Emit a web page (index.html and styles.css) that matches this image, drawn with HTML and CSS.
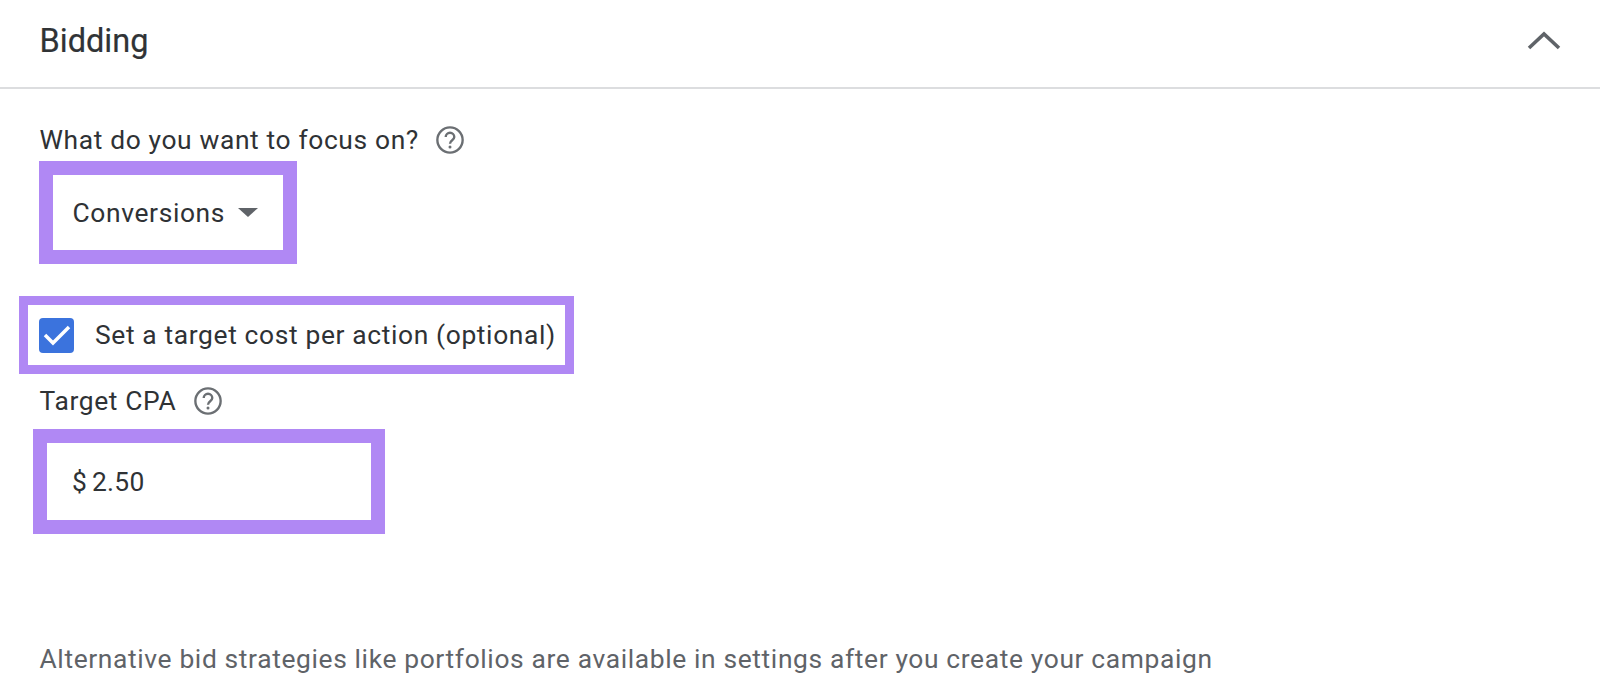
FILE: index.html
```html
<!DOCTYPE html>
<html lang="en">
<head>
<meta charset="utf-8">
<title>Bidding</title>
<link rel="stylesheet" href="styles.css">
</head>
<body>
<header class="head">
  <h2 class="title">Bidding</h2>
  <svg class="chevron" width="34" height="20" viewBox="0 0 34 20"><path d="M2 17 L17 3 L32 17" fill="none" stroke="#5f6368" stroke-width="3.6"/></svg>
</header>
<main class="body">
  <div class="label label-focus">What do you want to focus on?
    <svg class="help" width="30" height="30" viewBox="0 0 28 28"><circle cx="14" cy="14" r="11.8" fill="none" stroke="#6b6f73" stroke-width="2.2"/><path d="M10 11.2a4 4 0 0 1 8 0c0 3-4 3-4 6.2" fill="none" stroke="#6b6f73" stroke-width="2.2"/><circle cx="14" cy="20.6" r="1.4" fill="#6b6f73"/></svg>
  </div>
  <div class="mark mark-select">
    <span>Conversions</span>
    <span class="caret"></span>
  </div>
  <div class="mark mark-check">
    <span class="box"><svg width="28" height="22" viewBox="0 0 28 22"><path d="M2 11 L10 19 L26 3" fill="none" stroke="#fff" stroke-width="3.5"/></svg></span>
    <span>Set a target cost per action (optional)</span>
  </div>
  <div class="label label-cpa">Target CPA
    <svg class="help" width="30" height="30" viewBox="0 0 28 28"><circle cx="14" cy="14" r="11.8" fill="none" stroke="#6b6f73" stroke-width="2.2"/><path d="M10 11.2a4 4 0 0 1 8 0c0 3-4 3-4 6.2" fill="none" stroke="#6b6f73" stroke-width="2.2"/><circle cx="14" cy="20.6" r="1.4" fill="#6b6f73"/></svg>
  </div>
  <div class="mark mark-input">$ 2.50</div>
  <p class="note">Alternative bid strategies like portfolios are available in settings after you create your campaign</p>
</main>
</body>
</html>
```
FILE: styles.css
```css
html, body {
  margin: 0;
  height: 700px;
  overflow: hidden;
  background: #fff;
  font-family: Roboto, "Liberation Sans", sans-serif;
  color: #3c4043;
}
.head {
  display: flex;
  align-items: center;
  justify-content: space-between;
  padding: 0 39px 6px 39.5px;
  box-sizing: border-box;
  border-bottom: 2px solid #dcdddf;
  height: 89px;
}
.title {
  margin: 0;
  font-size: 32.5px;
  font-weight: 400;
  color: #303336;
  -webkit-text-stroke: 0.2px #303336;
}
.body {
  padding-left: 39.5px;
  display: flex;
  flex-direction: column;
  align-items: flex-start;
}
.label {
  display: flex;
  align-items: center;
  gap: 16.5px;
  font-size: 26.4px;
  letter-spacing: 0.63px;
  color: #2f3235;
  line-height: 30px;
}
.label-focus { margin-top: 36px; }
.label-cpa { margin-top: 12px; }
.mark {
  box-sizing: border-box;
  display: flex;
  align-items: center;
  border-style: solid;
  border-color: #b088f4;
  font-size: 26.4px;
  letter-spacing: 0.63px;
  color: #2f3235;
}
.mark-select {
  margin: 6px 0 0 -1px;
  width: 258px;
  height: 103px;
  border-width: 14px;
  padding-left: 20px;
}
.caret {
  margin-left: 13px;
  border-left: 10px solid transparent;
  border-right: 10px solid transparent;
  border-top: 9px solid #5f6368;
}
.mark-check {
  margin: 32px 0 0 -20.5px;
  width: 555px;
  height: 78px;
  border-width: 9.5px;
  padding-left: 11px;
  gap: 21px;
}
.box {
  width: 35px;
  height: 35px;
  border-radius: 4px;
  background: #3b73dd;
  display: flex;
  align-items: center;
  justify-content: center;
}
.mark-input {
  margin: 13px 0 0 -7px;
  width: 352px;
  height: 105px;
  border-width: 14px;
  padding-left: 25.5px;
  letter-spacing: 0.3px;
  word-spacing: -2px;
}
.note {
  margin: 110px 0 0;
  font-size: 26.4px;
  line-height: 30px;
  letter-spacing: 0.63px;
  color: #5f6368;
}
```
